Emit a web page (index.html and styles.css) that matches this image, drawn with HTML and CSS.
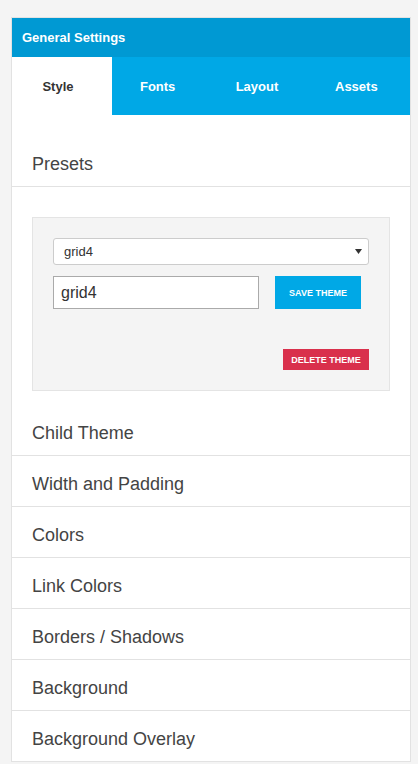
FILE: index.html
```html
<!DOCTYPE html>
<html>
<head>
<meta charset="utf-8">
<link rel="stylesheet" href="styles.css">
</head>
<body>
<div class="panel">
  <div class="panel-header">General Settings</div>
  <div class="tabs">
    <div class="tab active">Style</div>
    <div class="tab">Fonts</div>
    <div class="tab">Layout</div>
    <div class="tab">Assets</div>
  </div>
  <div class="panel-body">
    <div class="row">Presets</div>
    <div class="preset-box">
      <div class="select">
        <span>grid4</span>
        <svg class="caret" width="7" height="5" viewBox="0 0 7 5"><polygon points="0,0 7,0 3.5,5" fill="#333"/></svg>
      </div>
      <div class="save-row">
        <input class="name-input" type="text" value="grid4">
        <button class="btn btn-save">SAVE THEME</button>
      </div>
      <div class="delete-row">
        <button class="btn btn-delete">DELETE THEME</button>
      </div>
    </div>
    <div class="row">Child Theme</div>
    <div class="row">Width and Padding</div>
    <div class="row">Colors</div>
    <div class="row">Link Colors</div>
    <div class="row">Borders / Shadows</div>
    <div class="row">Background</div>
    <div class="row">Background Overlay</div>
  </div>
</div>
</body>
</html>
```

FILE: styles.css
```css
* { box-sizing: border-box; }
html, body { margin: 0; padding: 0; }
body {
  background: #f4f4f4;
  font-family: "Liberation Sans", Arial, sans-serif;
  color: #444;
  overflow: hidden;
}
.panel {
  margin: 17px 0 0 11px;
  width: 400px;
  background: #fff;
  border: 1px solid #e2e2e2;
  border-bottom: none;
}
.panel-header {
  height: 39px;
  background: #0099d3;
  color: #fff;
  font-weight: bold;
  font-size: 13px;
  display: flex;
  align-items: center;
  padding-left: 10px;
  padding-bottom: 1px;
}
.tabs {
  display: flex;
  height: 58px;
  background: #00a8e6;
}
.tab {
  flex: 1;
  display: flex;
  align-items: center;
  justify-content: center;
  padding-right: 8px;
  color: #fff;
  font-weight: bold;
  font-size: 13px;
}
.tab.active {
  background: #fff;
  color: #333;
  flex: 0 0 100px;
}
.panel-body {
  padding-top: 21px;
}
.row {
  font-size: 18px;
  line-height: 20px;
  padding: 18px 20px 12px;
  height: 51px;
  border-bottom: 1px solid #e2e2e2;
  color: #444;
}
.preset-box {
  margin: 30px 20px 14px;
  background: #f4f4f4;
  border: 1px solid #e4e4e4;
  padding: 20px;
}
.select {
  height: 27px;
  background: #fff;
  border: 1px solid #ccc;
  border-radius: 3px;
  display: flex;
  align-items: center;
  justify-content: space-between;
  padding: 0 6px 0 10px;
  font-size: 13px;
  color: #333;
}
.caret { display: block; }
.save-row {
  display: flex;
  margin-top: 11px;
}
.name-input {
  width: 206px;
  height: 33px;
  border: 1px solid #aaa;
  padding: 0 7px;
  font-family: "Liberation Sans", Arial, sans-serif;
  font-size: 16px;
  color: #333;
  background: #fff;
  outline: none;
  margin: 0;
}
.btn {
  border: none;
  margin: 0;
  color: #fff;
  font-family: "Liberation Sans", Arial, sans-serif;
  font-weight: bold;
  font-size: 9px;
  padding: 0;
  width: 86px;
  cursor: pointer;
}
.btn-save {
  margin-left: 16px;
  height: 33px;
  background: #00a8e6;
}
.delete-row {
  display: flex;
  justify-content: flex-end;
  margin-top: 40px;
}
.btn-delete {
  height: 21px;
  background: #d9304c;
}
```
